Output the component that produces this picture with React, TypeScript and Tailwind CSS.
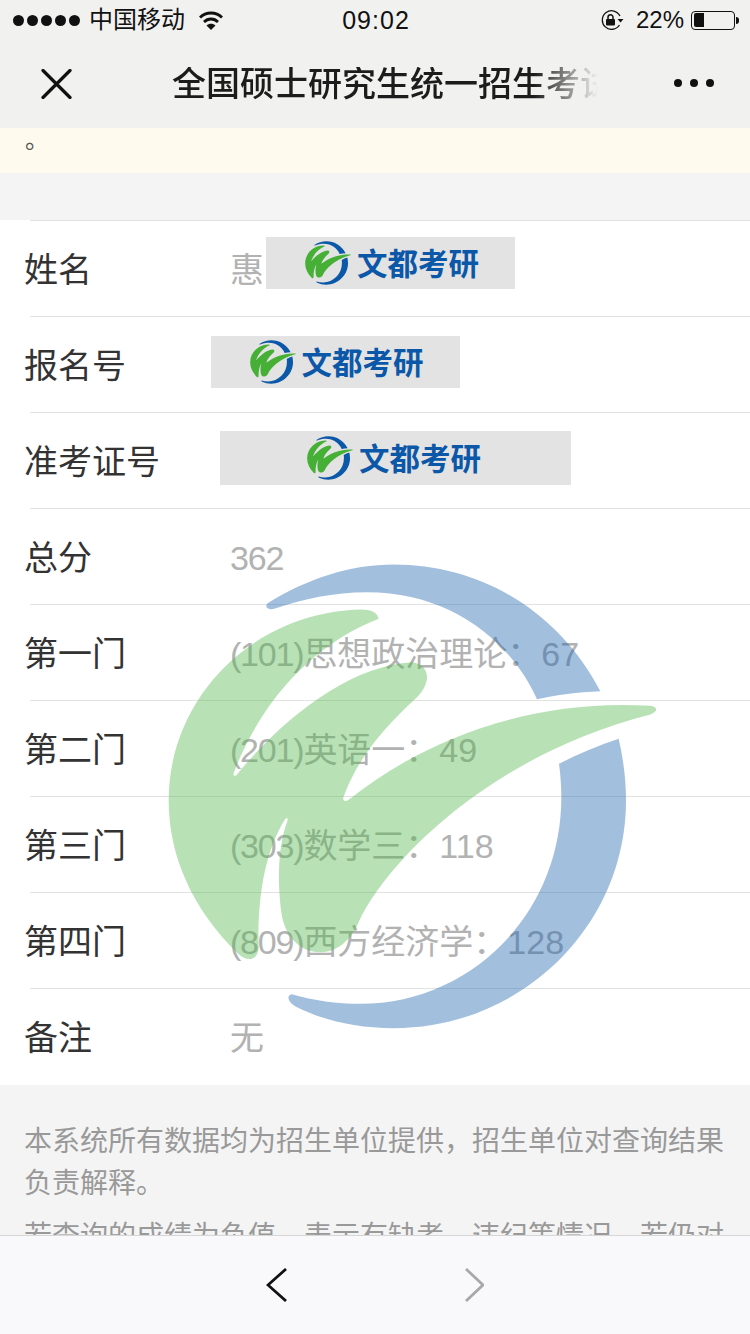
const rows = [
  { label: "姓名", value: "惠" },
  { label: "报名号", value: "" },
  { label: "准考证号", value: "" },
  { label: "总分", code: "362", value: "" },
  { label: "第一门", code: "(101)", value: "思想政治理论：67" },
  { label: "第二门", code: "(201)", value: "英语一：49" },
  { label: "第三门", code: "(303)", value: "数学三：118" },
  { label: "第四门", code: "(809)", value: "西方经济学：128" },
  { label: "备注", value: "无" },
];

const font = "font-['Liberation_Sans','Noto_Sans_CJK_SC',sans-serif]";

// Mark is traced in a 3x coordinate space, the viewBox crops it to its bounds
function LogoMark({ className, green, blue }: { className: string; green: string; blue: string }) {
  return (
    <svg viewBox="50 38 1473 1400" className={className}>
      <path
        fill={blue}
        d="M352 158 C470 85 600 42 730 42 C1000 42 1230 190 1350 422 C1280 425 1220 433 1160 446 C1080 270 900 125 650 125 C550 125 460 145 372 175 C355 180 340 170 352 158 Z"
      />
      <path
        fill={blue}
        d="M1405 565 C1420 630 1427 690 1427 750 C1427 1130 1110 1433 730 1433 C620 1433 520 1410 440 1370 C415 1358 405 1335 425 1331 C490 1350 560 1360 630 1360 C960 1360 1233 1090 1233 740 C1233 705 1230 670 1226 640 C1285 610 1345 585 1405 565 Z"
      />
      <path
        fill={green}
        d="M685 205 C680 185 665 177 630 177 C310 185 55 440 55 750 C55 920 130 1080 262 1208 C285 1232 320 1235 325 1195 C320 1040 345 900 405 805 C412 800 414 806 410 815 C385 880 380 980 392 1080 C402 1160 450 1205 510 1205 C560 1205 600 1170 625 1115 C700 950 1000 620 1500 492 C1522 484 1525 470 1500 466 C1150 445 830 560 595 748 C585 756 575 750 580 738 C620 630 690 540 800 440 C840 400 845 345 785 335 C600 345 400 500 258 674 C250 680 247 672 252 662 C330 460 480 285 685 205 Z"
      />
    </svg>
  );
}

function LogoSticker({ className }: { className: string }) {
  return (
    <div className={`absolute flex items-center justify-center gap-[6px] bg-[#e3e3e3] ${className}`}>
      <LogoMark className="w-[46px] h-[44px]" green="#45b035" blue="#0b57a8" />
      <span className="pt-[3px] text-[30.5px] leading-none font-bold text-[#0b57a8]">文都考研</span>
    </div>
  );
}

function StatusBar() {
  return (
    <div className="h-10 pl-[13px] pr-[11px] grid grid-cols-[1fr_auto_1fr] items-center text-[24px] text-[#111]">
      <div className="flex items-center">
        <div className="flex gap-[3px]">
          {[0, 1, 2, 3, 4].map((i) => (
            <span key={i} className="w-[11px] h-[11px] rounded-full bg-[#111]" />
          ))}
        </div>
        <span className="ml-[9px] leading-none">中国移动</span>
        <svg viewBox="0 0 24 19" className="ml-[14px] w-[24px] h-[19px]" fill="none" stroke="#111" strokeWidth="2.8">
          <path d="M1 6.5 C7 0.5 17 0.5 23 6.5" />
          <path d="M5 11 C9 7 15 7 19 11" />
          <path d="M12 19 L7.5 14.5 C10 12 14 12 16.5 14.5 Z" fill="#111" stroke="none" />
        </svg>
      </div>
      <span className="text-[25px] leading-none font-medium tracking-[1px]">09:02</span>
      <div className="flex items-center justify-end">
        <svg viewBox="0 0 24 20" className="w-[24px] h-[20px]" fill="none" stroke="#111" strokeWidth="1.3">
          <path d="M20 6 A9.3 9.3 0 1 0 19.5 15" />
          <path d="M17.5 9 H23.5 L20.5 12.5 Z" fill="#111" stroke="none" />
          <rect x="6" y="9" width="9" height="6.5" rx="1" fill="#111" stroke="none" />
          <path d="M8 9 V7.2 A2.5 2.5 0 0 1 13 7.2 V9" strokeWidth="1.5" />
        </svg>
        <span className="ml-[12px] leading-none">22%</span>
        <div className="ml-[7px] w-[44px] h-[19px] border border-[#111] rounded-[4px] p-[1.5px]">
          <div className="w-[10px] h-full bg-[#111] rounded-l-[2px]" />
        </div>
        <div className="w-[3px] h-[7px] bg-[#111] rounded-r-full ml-[1px]" />
      </div>
    </div>
  );
}

function NavBar() {
  return (
    <div className="h-[88px] flex items-center pl-[41px]">
      <svg viewBox="0 0 31 30" className="w-[31px] h-[30px] shrink-0" stroke="#111" strokeWidth="3.2" strokeLinecap="round">
        <path d="M2 1.5 L29 28.5 M29 1.5 L2 28.5" />
      </svg>
      <div className="ml-[100px] w-[426px] overflow-hidden whitespace-nowrap text-[34px] leading-none font-medium text-[#1c1c1c] [mask-image:linear-gradient(to_right,black_85%,transparent_100%)]">
        全国硕士研究生统一招生考试成绩查询
      </div>
      <div className="ml-[76px] mb-[2px] flex gap-[8px]">
        <span className="w-[8px] h-[8px] rounded-full bg-[#111]" />
        <span className="w-[8px] h-[8px] rounded-full bg-[#111]" />
        <span className="w-[8px] h-[8px] rounded-full bg-[#111]" />
      </div>
    </div>
  );
}

export default function App() {
  return (
    <div className={`relative h-[1334px] w-[750px] flex flex-col overflow-hidden bg-[#f4f4f4] ${font}`}>
      <header className="bg-[#f1f1f0]">
        <StatusBar />
        <NavBar />
      </header>

      <main className="flex-1 overflow-hidden">
        <div className="h-[45px] bg-[#fffaee] px-[25px] text-[24px] leading-[24px] text-[#555]">。</div>
        <div className="h-[47px]" />

        <div className="bg-white pt-px">
          {rows.map((row, i) => (
            <div key={row.label} className="relative h-[96px] flex items-center pt-[2px] pl-[24px]">
              <div className="absolute top-[-1px] left-[30px] right-0 h-px bg-[#e2e2e2]" />
              <span className="w-[206px] text-[34px] text-[#333]">{row.label}</span>
              <span className="text-[34px] text-[#b2b2b2]">
                {row.code && <span className="tracking-[-1.2px]">{row.code}</span>}
                {row.value}
              </span>
              {i === 0 && <LogoSticker className="left-[266px] top-[16px] w-[249px] h-[52px] pl-[3px]" />}
              {i === 1 && <LogoSticker className="left-[211px] top-[19px] w-[249px] h-[52px] pl-[2px]" />}
              {i === 2 && <LogoSticker className="left-[220px] top-[18px] w-[351px] h-[54px] pr-[3px]" />}
            </div>
          ))}
        </div>

        <div className="pt-[36px] pl-[24px] pr-[25px] text-[28px] leading-[42px] text-[#999]">
          <p>本系统所有数据均为招生单位提供，招生单位对查询结果负责解释。</p>
          <p className="mt-[11px]">若查询的成绩为负值，表示有缺考、违纪等情况。若仍对成绩有疑问</p>
        </div>
      </main>

      <footer className="h-[99px] shrink-0 bg-[#f9f9fb] border-t border-[#d6d6d6] flex items-center justify-center gap-[178px] pb-[1px]">
        <svg viewBox="0 0 21 34" className="w-[21px] h-[34px]" fill="none" stroke="#111" strokeWidth="2.8">
          <path d="M20 1 L2 17 L20 33" />
        </svg>
        <svg viewBox="0 0 19 34" className="w-[19px] h-[34px]" fill="none" stroke="#a8a8a8" strokeWidth="2.8">
          <path d="M1 1 L18 17 L1 33" />
        </svg>
      </footer>

      {/* watermark sits over the table, row lines and text show through */}
      <div className="absolute left-[167px] top-[563px] pointer-events-none opacity-40">
        <LogoMark className="w-[491px] h-[467px]" green="#50b64b" blue="#1961af" />
      </div>
    </div>
  );
}
